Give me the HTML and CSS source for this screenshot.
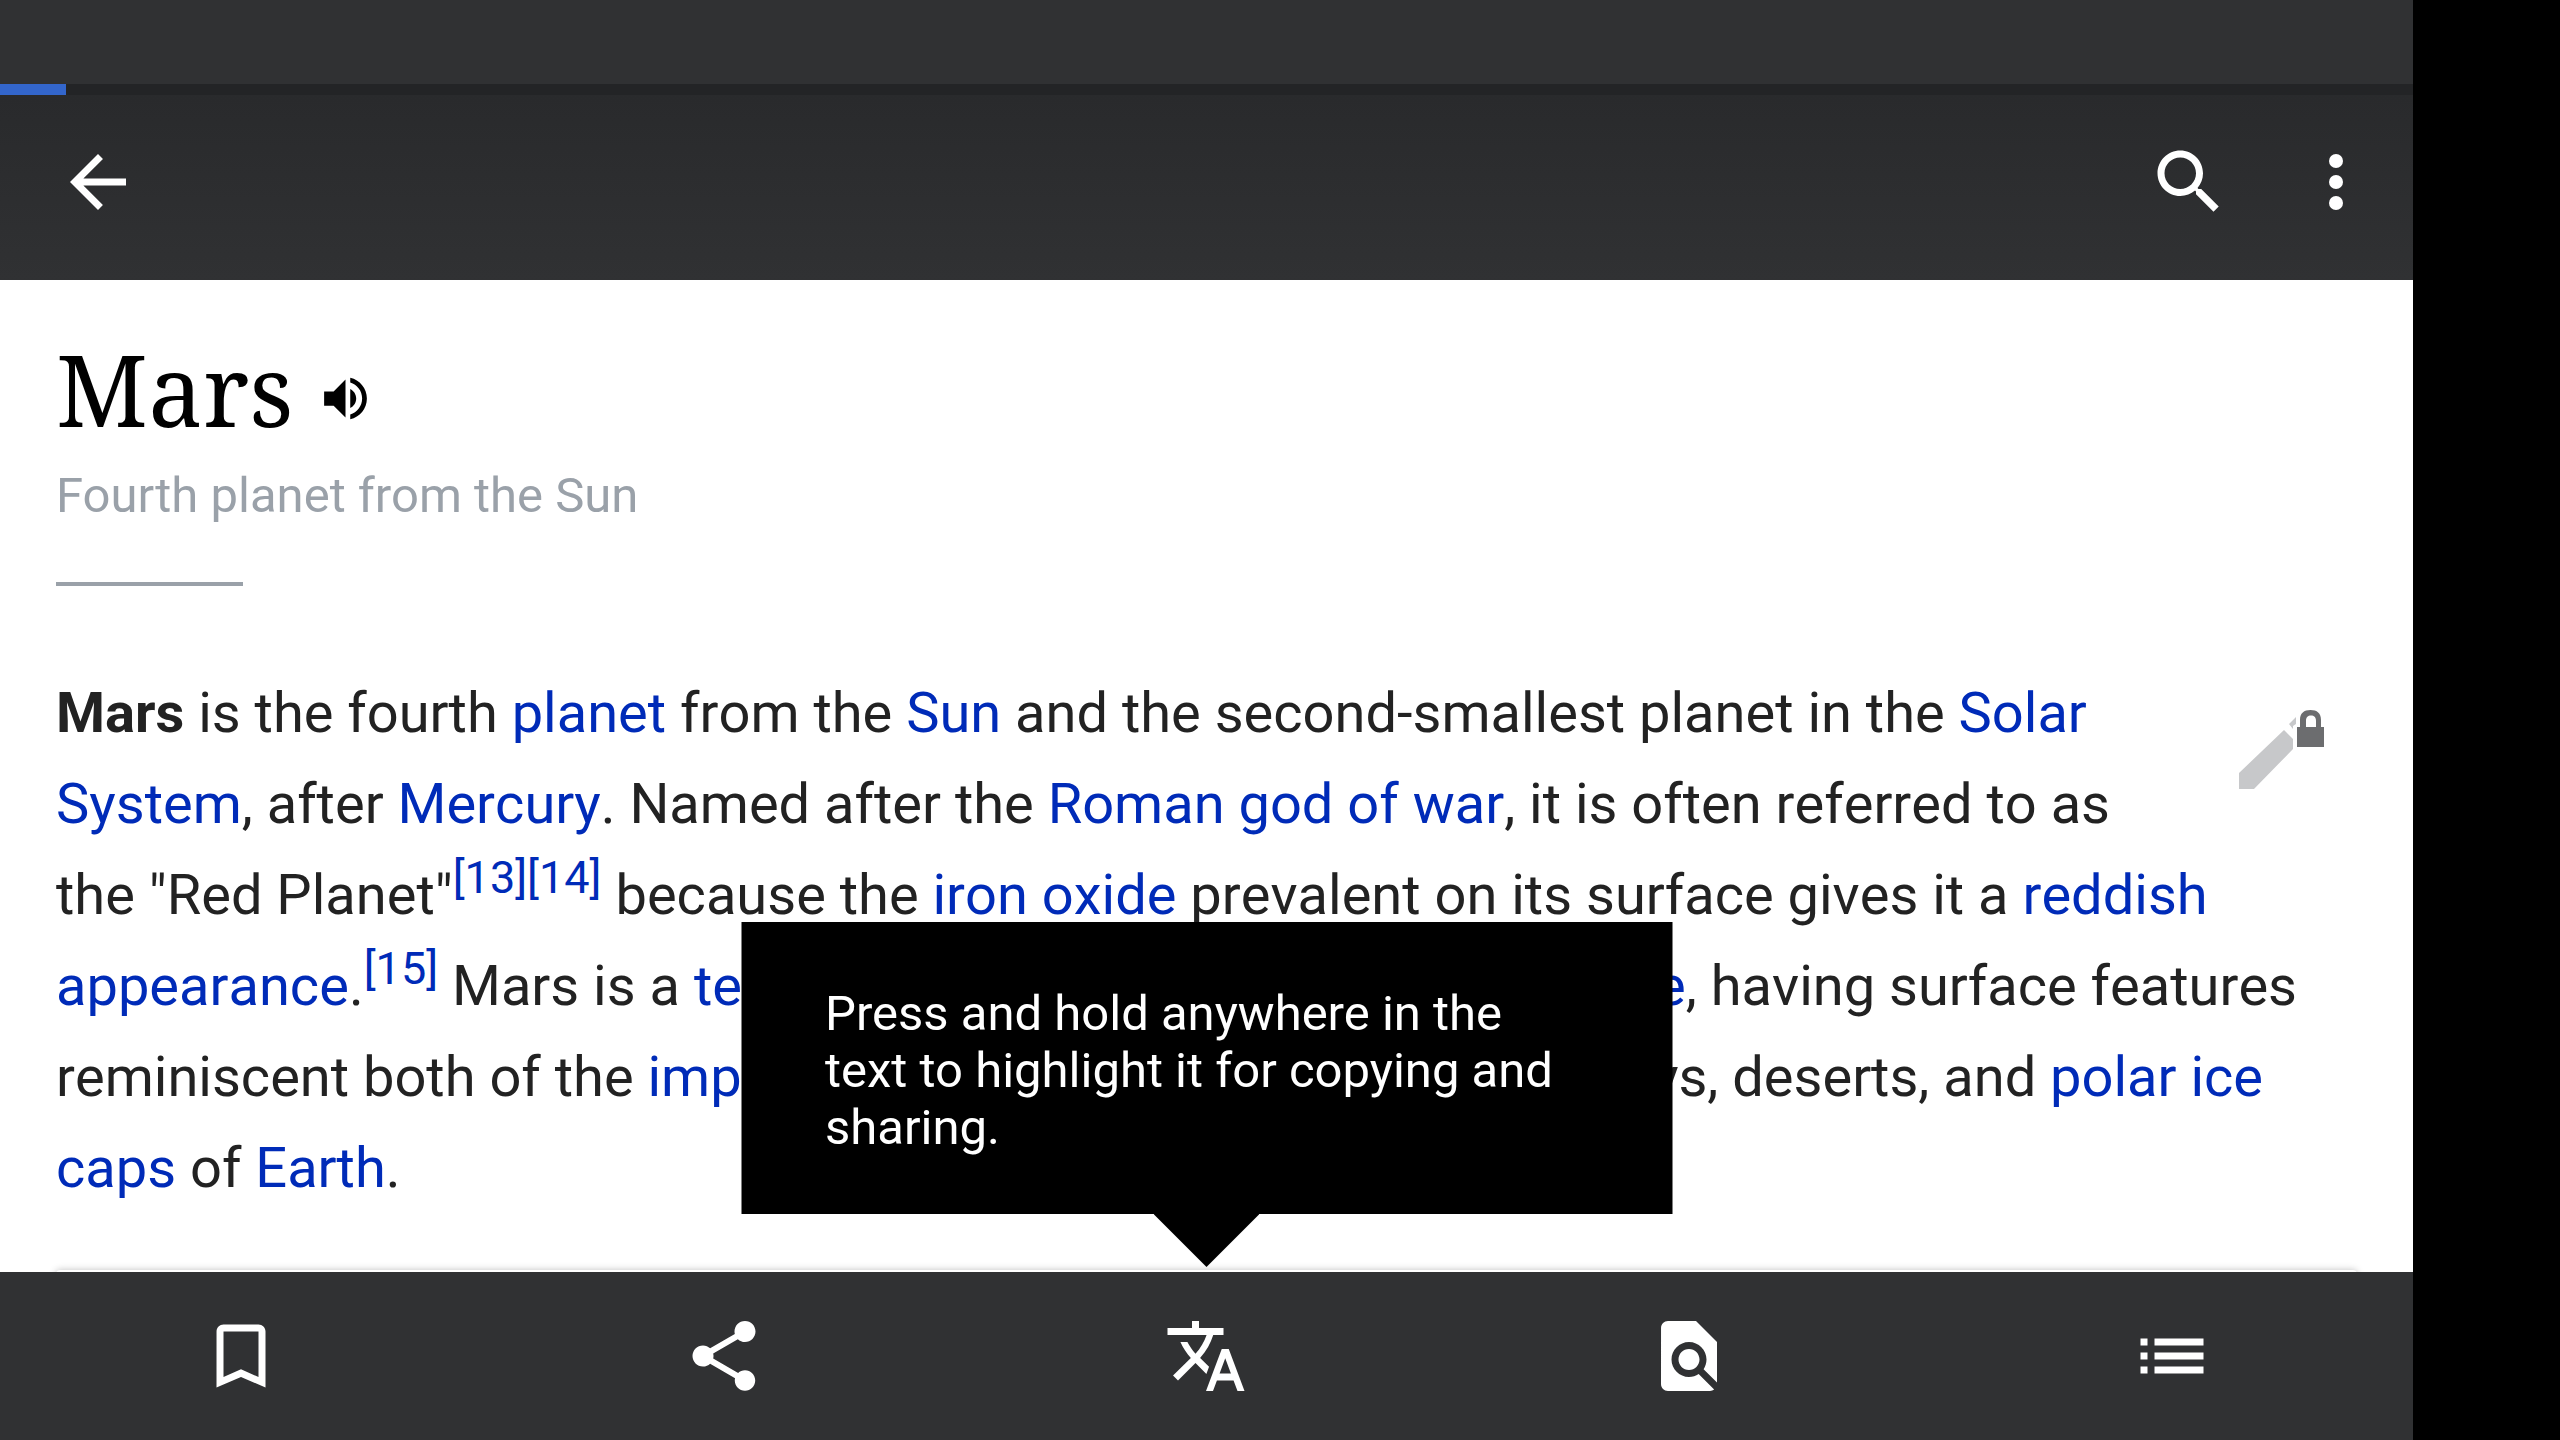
FILE: index.html
```html
<!DOCTYPE html>
<html lang="en">
<head>
<meta charset="utf-8">
<meta name="viewport" content="width=device-width, initial-scale=1">
<title>Mars</title>
<link rel="stylesheet" href="styles.css">
</head>
<body class="device">
<div class="app">
  <header class="header">
    <div class="status-bar"></div>
    <div class="progress" role="progressbar" aria-label="Loading page"><div class="progress-fill"></div></div>
    <div class="toolbar">
      <button class="icon-button" type="button" aria-label="Back">
        <svg class="icon" viewBox="0 0 24 24"><path d="M20 11H7.83l5.59-5.59L12 4l-8 8 8 8 1.41-1.41L7.83 13H20v-2z"/></svg>
      </button>
      <div class="toolbar-actions">
        <button class="icon-button" type="button" aria-label="Search">
          <svg class="icon" viewBox="0 0 24 24"><path d="M15.5 14h-.79l-.28-.27C15.41 12.59 16 11.11 16 9.5 16 5.91 13.09 3 9.5 3S3 5.91 3 9.5 5.91 16 9.5 16c1.61 0 3.09-.59 4.23-1.57l.27.28v.79l5 4.99L20.49 19l-4.99-5zm-6 0C7.01 14 5 11.99 5 9.5S7.01 5 9.5 5 14 7.01 14 9.5 11.99 14 9.5 14z"/></svg>
        </button>
        <button class="icon-button" type="button" aria-label="More options">
          <svg class="icon" viewBox="0 0 24 24"><circle cx="12" cy="6" r="2"/><circle cx="12" cy="12" r="2"/><circle cx="12" cy="18" r="2"/></svg>
        </button>
      </div>
    </div>
  </header>

  <main class="content">
    <article class="article">
      <div class="title-row">
        <h1 class="title">Mars</h1>
        <button class="listen" type="button" aria-label="Listen to pronunciation">
          <svg class="icon-small" viewBox="0 0 24 24"><path d="M3 9v6h4l5 5V4L7 9H3zm13.5 3c0-1.77-1.02-3.29-2.5-4.03v8.05c1.48-.73 2.5-2.25 2.5-4.02zM14 3.23v2.06c2.89.86 5 3.54 5 6.71s-2.11 5.85-5 6.71v2.06c4.01-.91 7-4.49 7-8.77s-2.99-7.86-7-8.77z"/></svg>
        </button>
      </div>
      <p class="subtitle">Fourth planet from the Sun</p>
      <hr class="divider">
      <div class="lead">
        <a class="edit" href="#edit" aria-label="Edit introduction (protected)">
          <svg class="edit-icon" viewBox="0 0 86 80">
            <path class="pencil" d="M0 64 45 21l9 9v10L15 80H0zM50 15l7-7v7l-3 2v3z"/>
            <path class="lock" d="M58 18h3v-7C61 4 65 1 71.500 1S82 4 82 11v7h3v20H58zM67 18h10v-6c0-4-2-5.500-5-5.500S67 8 67 12z"/>
          </svg>
        </a>
        <p class="text"><b>Mars</b> is the fourth <a href="#planet">planet</a> from the <a href="#sun">Sun</a> and the second-smallest planet in the <a href="#solar-system">Solar System</a>, after <a href="#mercury">Mercury</a>. Named after the <a href="#roman-god">Roman god of war</a>, it is often referred to as the "Red Planet"<sup class="ref"><a href="#n13">[13]</a><a href="#n14">[14]</a></sup> because the <a href="#iron-oxide">iron oxide</a> prevalent on its surface gives it a <a href="#reddish">reddish appearance</a>.<sup class="ref"><a href="#n15">[15]</a></sup> Mars is a <a href="#terrestrial">terrestrial planet</a> with a thin <a href="#atmosphere">atmosphere</a>, having surface features reminiscent both of the <a href="#craters">impact craters</a> of the <a href="#moon">Moon</a> and the valleys, deserts, and <a href="#ice-caps">polar ice caps</a> of <a href="#earth">Earth</a>.</p>
      </div>
      <div class="info-card"></div>
    </article>
    <div class="tooltip" role="tooltip">Press and hold anywhere in the text to highlight it for copying and sharing.</div>
  </main>

  <nav class="tabs" aria-label="Page tools">
    <button class="tab" type="button" aria-label="Save">
      <svg class="icon" viewBox="0 0 24 24"><path d="M17 3H7c-1.100 0-1.990.9-1.990 2L5 21l7-3 7 3V5c0-1.100-.9-2-2-2zm0 15l-5-2.180L7 18V5h10v13z"/></svg>
    </button>
    <button class="tab" type="button" aria-label="Share">
      <svg class="icon" viewBox="0 0 24 24"><path d="M18 16.080c-.76 0-1.440.3-1.960.77L8.910 12.700c.05-.23.09-.46.09-.7s-.04-.47-.09-.7l7.050-4.110c.54.5 1.250.81 2.040.81 1.660 0 3-1.340 3-3s-1.340-3-3-3-3 1.340-3 3c0 .24.04.47.09.7L8.040 9.810C7.500 9.310 6.790 9 6 9c-1.660 0-3 1.340-3 3s1.340 3 3 3c.79 0 1.500-.31 2.040-.81l7.120 4.160c-.05.21-.08.43-.08.65 0 1.610 1.310 2.920 2.920 2.920s2.920-1.310 2.920-2.920-1.310-2.920-2.920-2.920z"/></svg>
    </button>
    <button class="tab" type="button" aria-label="Languages">
      <svg class="icon" viewBox="0 0 24 24"><path d="M12.870 15.070l-2.540-2.510.03-.03c1.740-1.940 2.980-4.170 3.710-6.530H17V4h-7V2H8v2H1v1.990h11.170C11.500 7.920 10.440 9.750 9 11.350 8.070 10.320 7.300 9.190 6.690 8h-2c.73 1.630 1.730 3.170 2.980 4.560l-5.090 5.020L4 19l5-5 3.110 3.110.76-2.040zM18.500 10h-2L12 22h2l1.120-3h4.750L21 22h2l-4.500-12zm-2.620 7l1.620-4.330L19.120 17h-3.240z"/></svg>
    </button>
    <button class="tab" type="button" aria-label="Find in page">
      <svg class="icon" viewBox="0 0 24 24"><path d="M20 19.590V8l-6-6H6c-1.100 0-1.990.9-1.990 2L4 20c0 1.100.89 2 1.990 2H18c.45 0 .85-.15 1.190-.4l-4.430-4.430c-.8.52-1.740.83-2.760.83-2.760 0-5-2.240-5-5s2.240-5 5-5 5 2.240 5 5c0 1.020-.31 1.960-.83 2.750L20 19.590zM9 13c0 1.660 1.340 3 3 3s3-1.340 3-3-1.340-3-3-3-3 1.340-3 3z"/></svg>
    </button>
    <button class="tab" type="button" aria-label="Contents">
      <svg class="icon" viewBox="0 0 24 24"><path d="M3 7h2v2H3zM3 11h2v2H3zM3 15h2v2H3zM7 7h14v2H7zM7 11h14v2H7zM7 15h14v2H7z"/></svg>
    </button>
  </nav>
</div>
<aside class="system-nav"></aside>
</body>
</html>
```

FILE: styles.css
```css
* {
  box-sizing: border-box;
}

.device {
  margin: 0;
  height: 100vh;
  display: grid;
  grid-template-columns: minmax(0, 1fr) 147px;
  overflow: hidden;
  font-family: Roboto, "Liberation Sans", sans-serif;
}

.system-nav {
  background: #000;
}

.app {
  display: flex;
  flex-direction: column;
  min-height: 0;
  background: #fff;
}

button {
  margin: 0;
  padding: 0;
  border: 0;
  background: none;
  color: inherit;
  font: inherit;
}

.icon {
  display: block;
  width: 84px;
  height: 84px;
  fill: #fff;
}

.icon-small {
  display: block;
  width: 57px;
  height: 57px;
  fill: #000;
}

/* Header */
.status-bar {
  height: 84px;
  background: #303133;
}

.progress {
  height: 11px;
  background: #232426;
}

.progress-fill {
  width: 66px;
  height: 100%;
  background: #36c;
}

.toolbar {
  display: flex;
  justify-content: space-between;
  padding: 45px 35px 56px 56px;
  background: linear-gradient(#292a2c, #303133);
}

.toolbar-actions {
  display: flex;
  gap: 63px;
}

/* Article */
.content {
  position: relative;
  flex: 1;
  min-height: 0;
}

.article {
  height: 100%;
  padding: 53px 56px 0;
  overflow: hidden;
}

.title-row {
  display: flex;
  align-items: center;
  gap: 24px;
}

.title {
  margin: 0;
  font: 400 98px/112px "Noto Serif", "DejaVu Serif Condensed", "DejaVu Serif", serif;
}

.listen {
  padding-top: 18px;
}

.subtitle {
  margin: 16px 0 0;
  font-size: 49px;
  line-height: 70px;
  color: #9aa1a9;
}

.divider {
  width: 187px;
  height: 4px;
  margin: 51px 0 82px;
  border: 0;
  background: #9aa1a9;
}

.edit {
  float: right;
  width: 168px;
  height: 168px;
  padding: 41px 32px 0 50px;
}

.edit-icon {
  display: block;
  width: 86px;
  height: 80px;
}

.pencil {
  fill: #c7c8ca;
}

.lock {
  fill: #6c6d6f;
  fill-rule: evenodd;
}

.text {
  margin: 0;
  font-size: 56px;
  line-height: 91px;
  font-kerning: none;
  color: #222;
}

.text a {
  color: #002bb8;
  text-decoration: none;
}

.ref {
  font-size: 45px;
  line-height: 0;
  vertical-align: 21px;
}

.info-card {
  height: 56px;
  margin-top: 56px;
  border-radius: 4px;
  box-shadow: 0 0 7px rgba(0, 0, 0, 0.25);
}

/* Hint above the bottom bar */
.tooltip {
  position: absolute;
  left: 50%;
  bottom: 58px;
  width: 931px;
  padding: 63px 84px 58px;
  transform: translateX(-50%);
  background: #000;
  color: #fff;
  font-size: 49px;
  line-height: 57px;
}

.tooltip::after {
  content: "";
  position: absolute;
  top: 100%;
  left: 50%;
  width: 106px;
  height: 53px;
  transform: translateX(-50%);
  background: #000;
  clip-path: polygon(0 0, 100% 0, 50% 100%);
}

/* Bottom bar */
.tabs {
  display: grid;
  grid-template-columns: repeat(5, 1fr);
  background: #303133;
}

.tab {
  display: flex;
  justify-content: center;
  padding: 42px 0;
}
```
